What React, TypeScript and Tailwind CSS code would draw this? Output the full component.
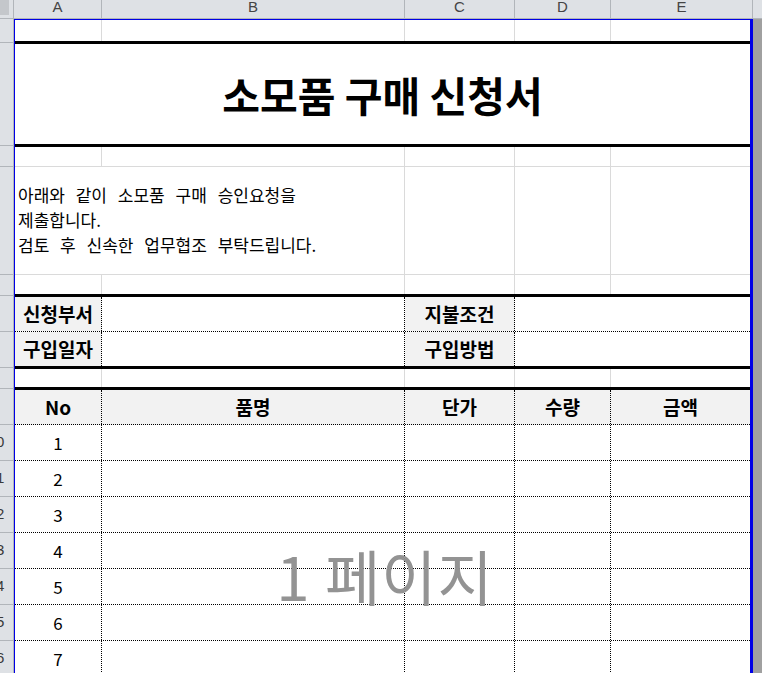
const KR = "font-['Noto_Sans_CJK_KR','Noto_Sans',sans-serif]";
const GRID = "border-r border-[#dadada]";
const DOT = "border-r border-dotted border-black";

const colLetters = [
  { l: "A", w: "w-[88px]" },
  { l: "B", w: "w-[303px]" },
  { l: "C", w: "w-[110px]" },
  { l: "D", w: "w-[96px]" },
  { l: "E", w: "w-[142px]" },
];

// row header heights, in order (incl. bottom border)
const rowHeads: { h: string; n?: string }[] = [
  { h: "h-[24px]" },
  { h: "h-[103px]" },
  { h: "h-[21px]" },
  { h: "h-[108px]" },
  { h: "h-[21px]" },
  { h: "h-[36px]" },
  { h: "h-[36px]" },
  { h: "h-[21px]" },
  { h: "h-[36px]" },
  { h: "h-[36px]", n: "0" },
  { h: "h-[36px]", n: "1" },
  { h: "h-[36px]", n: "2" },
  { h: "h-[36px]", n: "3" },
  { h: "h-[36px]", n: "4" },
  { h: "h-[36px]", n: "5" },
  { h: "h-[36px]", n: "6" },
];

function GridRow({ className }: { className: string }) {
  return (
    <div className={`flex ${className}`}>
      <div className={`w-[87px] ${GRID}`} />
      <div className={`w-[303px] ${GRID}`} />
      <div className={`w-[110px] ${GRID}`} />
      <div className={`w-[96px] ${GRID}`} />
      <div className="flex-1" />
    </div>
  );
}

function InfoRow({ a, c, className }: { a: string; c: string; className: string }) {
  return (
    <div className={`flex ${className}`}>
      <div className={`w-[87px] ${DOT} bg-[#f2f2f2] flex items-center justify-center font-bold text-[19px]`}>{a}</div>
      <div className={`w-[303px] ${DOT}`} />
      <div className={`w-[110px] ${DOT} bg-[#f2f2f2] flex items-center justify-center font-bold text-[19px]`}>{c}</div>
      <div className="flex-1" />
    </div>
  );
}

export default function App() {
  const items = [1, 2, 3, 4, 5, 6, 7];
  return (
    <div className={`relative w-[762px] h-[673px] overflow-hidden bg-white text-black ${KR}`}>
      {/* column header */}
      <div className="flex h-[19px] bg-[#dee1e5] border-b border-[#b1b5ba] overflow-hidden">
        <div className="w-[14px] border-r border-[#b1b5ba] relative">
          <div className="w-[9px] h-[15px] bg-[#c4c7cb]" />
        </div>
        {colLetters.map((c) => (
          <div
            key={c.l}
            className={`${c.w} border-r border-[#b1b5ba] flex justify-center font-['Liberation_Sans',sans-serif] text-[15px] leading-[14px] text-[#444]`}
          >
            {c.l}
          </div>
        ))}
        <div className="flex-1" />
      </div>

      <div className="flex">
        {/* row header */}
        <div className="w-[14px] bg-[#dee1e5] border-r border-[#b1b5ba] flex flex-col">
          {rowHeads.map((r, i) => (
            <div
              key={i}
              className={`${r.h} shrink-0 border-b border-[#b1b5ba] overflow-hidden flex items-center font-['Liberation_Sans',sans-serif] text-[15px] text-[#3a3a3a]`}
            >
              {r.n && <span className="-ml-[4px]">{r.n}</span>}
            </div>
          ))}
        </div>

        {/* print area */}
        <div className="w-[739px] shrink-0 border-l border-t border-r-[3px] border-[#0000e6] flex flex-col">
          <GridRow className="h-[24px] border-b-[3px] border-black" />

          <div className="h-[103px] border-b-[3px] border-black flex items-center justify-center">
            <span className="text-[41px] font-bold leading-none">소모품 구매 신청서</span>
          </div>

          <GridRow className="h-[20px] border-b border-[#dadada]" />

          <div className="flex h-[108px] border-b border-[#dadada]">
            <div className={`w-[390px] ${GRID} flex items-center pl-[3px] text-[17px] leading-[25px] [word-spacing:7px]`}>
              <p className="-mt-[2px]">
                아래와 같이 소모품 구매 승인요청을
                <br />
                제출합니다.
                <br />
                검토 후 신속한 업무협조 부탁드립니다.
              </p>
            </div>
            <div className={`w-[110px] ${GRID}`} />
            <div className={`w-[96px] ${GRID}`} />
            <div className="flex-1" />
          </div>

          <GridRow className="h-[22px] border-b-[3px] border-black" />

          <InfoRow a="신청부서" c="지불조건" className="h-[35px] border-b border-dotted border-black" />
          <InfoRow a="구입일자" c="구입방법" className="h-[37px] border-b-[3px] border-black" />

          <GridRow className="h-[21px] border-b-[3px] border-black" />

          <div className="flex h-[35px] border-b border-dotted border-black bg-[#f2f2f2] font-bold text-[19px]">
            <div className={`w-[87px] ${DOT} flex items-center justify-center`}>No</div>
            <div className={`w-[303px] ${DOT} flex items-center justify-center`}>품명</div>
            <div className={`w-[110px] ${DOT} flex items-center justify-center`}>단가</div>
            <div className={`w-[96px] ${DOT} flex items-center justify-center`}>수량</div>
            <div className="flex-1 flex items-center justify-center">금액</div>
          </div>

          {items.map((n) => (
            <div key={n} className="flex h-[36px] shrink-0 border-b border-dotted border-black text-[17px]">
              <div className={`w-[87px] ${DOT} flex items-center justify-center`}>{n}</div>
              <div className={`w-[303px] ${DOT}`} />
              <div className={`w-[110px] ${DOT}`} />
              <div className={`w-[96px] ${DOT}`} />
              <div className="flex-1" />
            </div>
          ))}
        </div>

        <div className="flex-1 bg-[#a0a0a0]" />
      </div>

      {/* page watermark */}
      <div className="absolute left-[17px] w-[736px] top-[537px] text-center text-[60px] leading-[76px] tracking-[1px] text-[#939393] pointer-events-none">
        1 페이지
      </div>
    </div>
  );
}
